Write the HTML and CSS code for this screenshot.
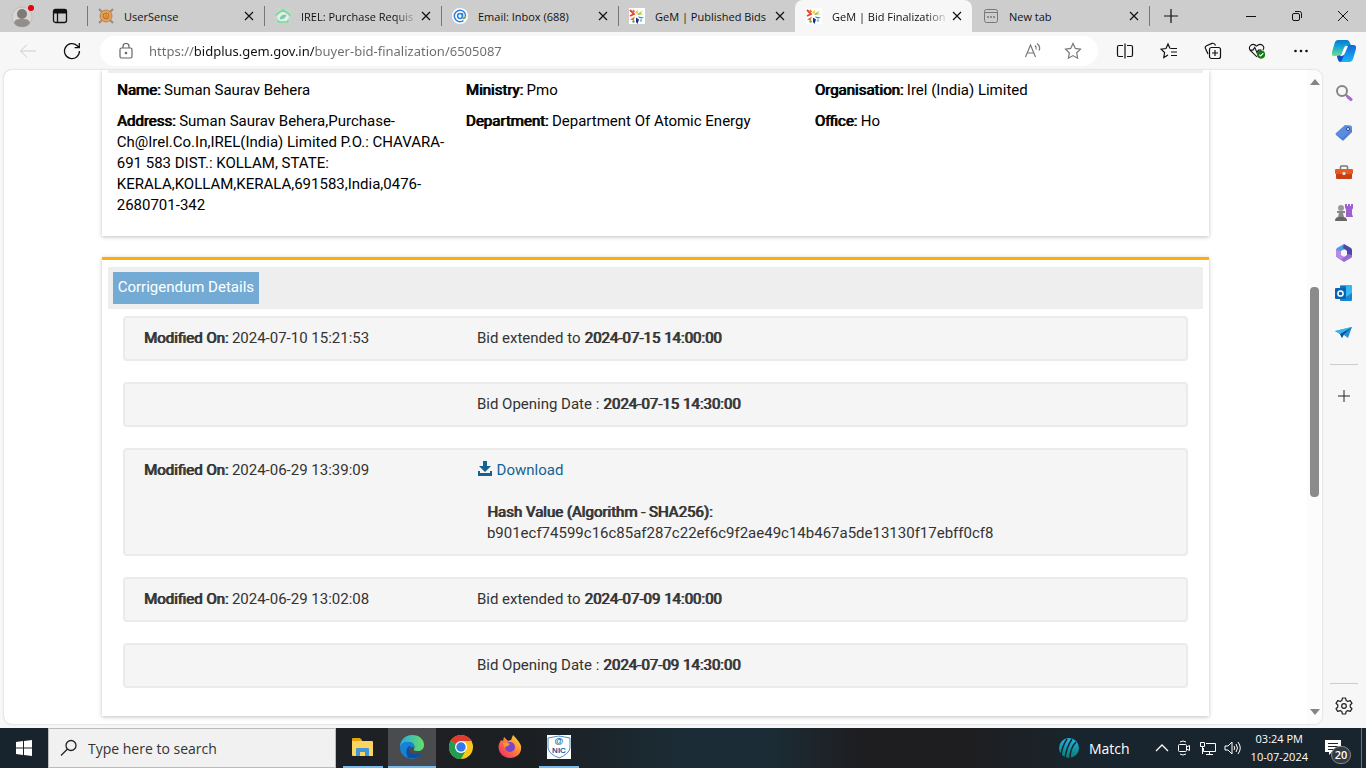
FILE: index.html
```
<!DOCTYPE html>
<html lang="en">
<head>
    <meta charset="UTF-8">
    <meta name="viewport" content="width=device-width, initial-scale=1.0">
    <title>GeM | Bid Finalization</title>
    <link rel="stylesheet" href="styles.css">
</head>
<body>
    <!-- Shared icons -->
    <svg class="defs" aria-hidden="true">
        <symbol id="close" viewBox="0 0 16 16"><path d="M4 4l8 8M12 4l-8 8" fill="none" stroke="#111" stroke-width="1.2"/></symbol>
        <symbol id="gem" viewBox="0 0 16 16">
            <rect width="16" height="16" fill="#fff"/>
            <path d="M1 2l4 4-4 2" fill="none" stroke="#e0412f" stroke-width="1.8"/>
            <path d="M4 2l1.500 2" stroke="#ef6c1a" stroke-width="1.500"/>
            <path d="M6 5l3-3.500-.5 4z" fill="#f2c21a"/>
            <path d="M8 6l6-3.500-2.500 3L15 6l-6 1z" fill="#a5c73c"/>
            <path d="M9 8.500l6 1-2 1-3-.5z" fill="#2f8fd0"/>
            <path d="M7 9.500l3 2-1.500 4.500-1.500-2z" fill="#1f2a8c"/>
            <path d="M1 11.500l5-3-1.500 4z" fill="#ef6c1a"/>
            <circle cx="4.500" cy="13.500" r="1.200" fill="#4caf50"/>
            <circle cx="12" cy="12.500" r="1.200" fill="#6cc2e8"/>
        </symbol>
    </svg>

    <!-- Browser tabs -->
    <header class="tab-bar">
        <div class="profile">
            <button class="icon-btn" aria-label="Profile">
                <svg width="24" height="24" viewBox="0 0 24 24"><circle cx="11" cy="13" r="10" fill="#d8d5d2" stroke="#c2beba"/><circle cx="11" cy="10" r="5" fill="#7d7a78"/><path d="M3 19c1-4 4-4 8-4s7 0 8 4c-2 3-5 4-8 4s-6-1-8-4z" fill="#918e8b"/><circle cx="20" cy="4" r="3" fill="#e3000f"/></svg>
            </button>
            <button class="icon-btn" aria-label="Tab actions">
                <svg width="16" height="16" viewBox="0 0 16 16" fill="none" stroke="#111" stroke-width="1.3"><rect x="1.5" y="1.5" width="13" height="13" rx="2"/><path d="M1.5 3.5h13" stroke-width="4"/><path d="M5.5 5v9"/></svg>
            </button>
        </div>
        <div class="tab">
            <svg width="16" height="16" viewBox="0 0 16 16"><path d="M1 1l14 14M15 1L1 15" stroke="#9a8a80" stroke-width="2"/><circle cx="8" cy="8" r="6" fill="#dda659" stroke="#bd8348"/><circle cx="8" cy="8" r="3" fill="none" stroke="#c06a25"/><path d="M7 5h2v3l2 2H5l2-2z" fill="#d9863c"/></svg>
            <span class="tab-title">UserSense</span>
            <button class="tab-close" aria-label="Close tab"><svg><use href="#close"/></svg></button>
        </div>
        <div class="tab">
            <svg width="16" height="16" viewBox="0 0 16 16"><rect width="16" height="16" fill="#c4d6cb"/><path d="M8 2l6.500 4.500L12.500 14h-9L1.500 6.500z" fill="#e3eee7"/><path d="M1.500 8V6.500L8 2l6.500 4.500V8M3 12l.5 2h9l.5-2" fill="none" stroke="#79d99b" stroke-width="1.6"/><path d="M4.500 11c1-4 4-5 7-4-1 3-4 5-7 4z" fill="#79c9b4"/></svg>
            <span class="tab-title fade">IREL: Purchase Requis</span>
            <button class="tab-close" aria-label="Close tab"><svg><use href="#close"/></svg></button>
        </div>
        <div class="tab">
            <svg width="16" height="16" viewBox="0 0 16 16" fill="none"><circle cx="8" cy="8" r="8" fill="#fff"/><circle cx="8" cy="8" r="2.4" stroke="#2b7de0" stroke-width="1.5"/><path d="M10.500 5v4c0 2 3 2 3-1C13.500 4.500 11 2.300 8 2.300S2.300 5 2.300 8 5 13.700 8 13.700c1.500 0 2.500-.4 3.500-1" stroke="#2b7de0" stroke-width="1.500"/><path d="M13.500 8c0 3-3 3-3 1" stroke="#7cb342" stroke-width="1.500"/></svg>
            <span class="tab-title">Email: Inbox (688)</span>
            <button class="tab-close" aria-label="Close tab"><svg><use href="#close"/></svg></button>
        </div>
        <div class="tab">
            <svg width="16" height="16"><use href="#gem"/></svg>
            <span class="tab-title">GeM | Published Bids</span>
            <button class="tab-close" aria-label="Close tab"><svg><use href="#close"/></svg></button>
        </div>
        <div class="tab active">
            <svg width="16" height="16"><use href="#gem"/></svg>
            <span class="tab-title fade">GeM | Bid Finalization</span>
            <button class="tab-close" aria-label="Close tab"><svg><use href="#close"/></svg></button>
        </div>
        <div class="tab last">
            <svg width="16" height="16" viewBox="0 0 16 16" fill="none" stroke="#777"><rect x="1.500" y="1.500" width="13" height="13" rx="2"/><path d="M2 4.500h12"/><path d="M4 9h2M7 9h2M10 9h2" stroke-width="1.500"/></svg>
            <span class="tab-title">New tab</span>
            <button class="tab-close" aria-label="Close tab"><svg><use href="#close"/></svg></button>
        </div>
        <button class="new-tab" aria-label="New tab"><svg width="16" height="16" viewBox="0 0 16 16"><path d="M8 1v14M1 8h14" stroke="#111" stroke-width="1.200"/></svg></button>
        <div class="window-buttons">
            <button aria-label="Minimize"><svg width="12" height="12" viewBox="0 0 12 12"><path d="M1 6.500h10" stroke="#111"/></svg></button>
            <button aria-label="Restore"><svg width="12" height="12" viewBox="0 0 12 12" fill="none" stroke="#111"><rect x="1.500" y="3.500" width="7" height="7" rx="1.500"/><path d="M4 1.500h4.500q2 0 2 2V8"/></svg></button>
            <button aria-label="Close"><svg width="12" height="12" viewBox="0 0 12 12"><path d="M1 1l10 10M11 1L1 11" stroke="#111"/></svg></button>
        </div>
    </header>

    <!-- Address bar -->
    <div class="toolbar">
        <button class="icon-btn" aria-label="Back"><svg width="18" height="18" viewBox="0 0 18 18" fill="none" stroke="#ccc"><path d="M17 9H2M8 2.500L1.500 9 8 15.500"/></svg></button>
        <button class="icon-btn" aria-label="Refresh"><svg width="18" height="18" viewBox="0 0 18 18" fill="none" stroke="#111" stroke-width="1.300"><path d="M16.500 9A7.500 7.500 0 1 1 14 3.500L16 5.500M16.300 1v4.700h-4.700"/></svg></button>
        <div class="address">
            <svg width="14" height="16" viewBox="0 0 14 16" fill="none" stroke="#666" stroke-width="1.200"><rect x="1" y="5" width="12" height="10" rx="1.500"/><path d="M4 5V3.500a3 3 0 0 1 6 0V5"/><circle cx="7" cy="10" r=".7" fill="#666"/></svg>
            <input class="url" type="text" aria-label="Address" value="https://bidplus.gem.gov.in/buyer-bid-finalization/6505087">
            <button class="icon-btn" aria-label="Read aloud"><svg width="18" height="18" viewBox="0 0 18 18" fill="none" stroke="#777" stroke-width="1.200"><path d="M1.500 15L6.500 3l5 12M3.200 11h6.600"/><path d="M11 3.500q2 2 1 4M13 1.500q4 3 2 7"/></svg></button>
            <button class="icon-btn" aria-label="Favorite"><svg width="18" height="18" viewBox="0 0 18 18" fill="none" stroke="#777" stroke-width="1.200"><path d="M9 1.500l2.300 4.900 5.200.7-3.800 3.700.9 5.400L9 13.600l-4.600 2.600.9-5.400L1.500 7.100l5.200-.7z"/></svg></button>
        </div>
        <div class="tools">
            <button class="icon-btn" aria-label="Split screen"><svg width="18" height="18" viewBox="0 0 18 18" fill="none" stroke="#111" stroke-width="1.200"><path d="M7 3.500H3q-1.500 0-1.500 1.500v8q0 1.500 1.500 1.500h4M11 3.500h4q1.500 0 1.500 1.500v8q0 1.500-1.500 1.500h-4M9 1.500v15"/></svg></button>
            <button class="icon-btn" aria-label="Favorites"><svg width="18" height="18" viewBox="0 0 18 18" fill="none" stroke="#111" stroke-width="1.200"><path d="M10 6.500L8 2 6 6.500l-5 .7 3.600 3.300-.8 5L8 13M10.500 6.500H17M11 10h6M11 13.500h6"/></svg></button>
            <button class="icon-btn" aria-label="Collections"><svg width="18" height="18" viewBox="0 0 18 18" fill="none" stroke="#111" stroke-width="1.200"><rect x="5.500" y="5.500" width="11" height="11" rx="2"/><path d="M11 8v6M8 11h6M4 12L1.500 6.500q-.8-2 1-2.800L8 1.400q2-.6 3 1.100l.5 1"/></svg></button>
            <button class="icon-btn" aria-label="Browser essentials"><svg width="20" height="18" viewBox="0 0 20 18" fill="none" stroke="#111" stroke-width="1.200"><path d="M10 15.500L3 9C-1 4 5-1 9.500 3.500 14 -1 20 4 16.500 8M2 8h3.500l2-3 2.500 6L11.500 8H15"/><circle cx="14.500" cy="13" r="4.500" fill="#107c10" stroke="none"/><path d="M12.500 13l1.500 1.500 3-3" stroke="#fff"/></svg></button>
            <button class="icon-btn" aria-label="More"><svg width="18" height="18" viewBox="0 0 18 18" fill="#111"><circle cx="3.500" cy="9" r="1.300"/><circle cx="9" cy="9" r="1.300"/><circle cx="14.500" cy="9" r="1.300"/></svg></button>
        </div>
        <button class="icon-btn copilot" aria-label="Copilot">
            <svg width="24" height="24" viewBox="0 0 24 24">
                <defs><linearGradient id="cp1" x2="0" y2="1"><stop stop-color="#0879cc"/><stop offset=".4" stop-color="#12a3d6"/><stop offset="1" stop-color="#6fe08a"/></linearGradient><linearGradient id="cp2" x2="0" y2="1"><stop stop-color="#1565d8"/><stop offset="1" stop-color="#16b7f5"/></linearGradient></defs>
                <path d="M6 1h9q2 0 3 3l1 2h-4q-2 0-3 3l-2 6q-1 2-3 2H2q-3 0-2-4L3 3q1-2 3-2z" fill="url(#cp1)"/>
                <path d="M16 6h5q4 0 3 4l-3 10q-1 3-4 3H9q-2 0-3-2l-1-4q4 0 5-3l2-5q1-3 4-3z" fill="url(#cp2)"/>
                <path d="M5 17q4 0 5-3h3l-3 7q-1 2-2 2-2-1-3-6z" fill="#1a49c9"/>
                <path d="M14 7h2l-3 7q-1 3-4 3H8q1-1 2-3l2-5q1-2 2-2z" fill="#fff"/>
            </svg>
        </button>
    </div>

    <div class="workspace">
        <!-- Page -->
        <div class="page">
            <main class="content">
                <section class="card buyer">
                    <div class="strip"></div>
                    <div class="details">
                        <p><b>Name:</b> Suman Saurav Behera</p>
                        <p><b>Ministry:</b> Pmo</p>
                        <p><b>Organisation:</b> Irel (India) Limited</p>
                        <p><b>Address:</b> Suman Saurav Behera,Purchase-Ch@Irel.Co.In,IREL(India) Limited P.O.: CHAVARA-691 583 DIST.: KOLLAM, STATE: KERALA,KOLLAM,KERALA,691583,India,0476-2680701-342</p>
                        <p><b>Department:</b> Department Of Atomic Energy</p>
                        <p><b>Office:</b> Ho</p>
                    </div>
                </section>

                <section class="card corrigendum">
                    <div class="card-header"><h2>Corrigendum Details</h2></div>
                    <div class="well">
                        <div><b>Modified On:</b> 2024-07-10 15:21:53</div>
                        <div>Bid extended to <b>2024-07-15 14:00:00</b></div>
                    </div>
                    <div class="well">
                        <div></div>
                        <div>Bid Opening Date : <b>2024-07-15 14:30:00</b></div>
                    </div>
                    <div class="well">
                        <div><b>Modified On:</b> 2024-06-29 13:39:09</div>
                        <div>
                            <a href="#"><svg width="16" height="15" viewBox="0 0 16 15"><path d="M6 0h4v5h4l-6 6-6-6h4z"/><path d="M1 10h2v2h10v-2h2v5H1z"/></svg> Download</a>
                            <div class="hash"><b>Hash Value (Algorithm - SHA256):</b><br>b901ecf74599c16c85af287c22ef6c9f2ae49c14b467a5de13130f17ebff0cf8</div>
                        </div>
                    </div>
                    <div class="well">
                        <div><b>Modified On:</b> 2024-06-29 13:02:08</div>
                        <div>Bid extended to <b>2024-07-09 14:00:00</b></div>
                    </div>
                    <div class="well">
                        <div></div>
                        <div>Bid Opening Date : <b>2024-07-09 14:30:00</b></div>
                    </div>
                </section>
            </main>
            <div class="scrollbar">
                <svg width="10" height="6" viewBox="0 0 10 6"><path d="M5 0l5 6H0z"/></svg>
                <div class="thumb"></div>
                <svg class="down" width="10" height="6" viewBox="0 0 10 6"><path d="M0 0h10L5 6z"/></svg>
            </div>
        </div>

        <!-- Edge sidebar -->
        <aside class="sidebar">
            <button class="icon-btn" aria-label="Search"><svg width="18" height="18" viewBox="0 0 18 18" fill="none"><circle cx="7" cy="7" r="5" stroke="#858585" stroke-width="2"/><path d="M11 11l2 2" stroke="#777" stroke-width="2"/><path d="M13 13l3 2.500" stroke="#a66bd6" stroke-width="3" stroke-linecap="round"/></svg></button>
            <button class="icon-btn" aria-label="Shopping"><svg width="18" height="18" viewBox="0 0 18 18"><path d="M10 1l5.500.5q1.500 0 1.500 2V8l-8 8q-1 1-2 0l-6-5q-1-1 0-2z" fill="#5b8ce0"/><path d="M1 10.500l7 6L17 8V5l-9 9z" fill="#4270c4" opacity=".5"/><circle cx="13" cy="5" r="1.500" fill="#fff" stroke="#264b8f"/></svg></button>
            <button class="icon-btn" aria-label="Tools"><svg width="18" height="18" viewBox="0 0 18 18"><path d="M5.500 5V3q0-1 1-1h5q1 0 1 1v2" fill="none" stroke="#777" stroke-width="1.500"/><rect x="0" y="5" width="18" height="5" rx="1" fill="#e75a24"/><path d="M1 10h16v4q0 1-1 1H2q-1 0-1-1z" fill="#c93f12"/><circle cx="9" cy="9.500" r="1.700" fill="#ddd"/></svg></button>
            <button class="icon-btn" aria-label="Games"><svg width="20" height="18" viewBox="0 0 20 18"><path d="M11 0h2v2h1V0h2v2h1V0h2v4l-1 2v4l1 3h-7V5l-1-1z" fill="#a05fd0"/><circle cx="7" cy="4" r="3" fill="#999"/><path d="M3 7h8v2H9l1 4H4l1-4H3z" fill="#888"/><path d="M1 17q0-4 4-4h4q4 0 4 4z" fill="#666"/></svg></button>
            <button class="icon-btn" aria-label="Microsoft 365"><svg width="18" height="18" viewBox="0 0 18 18"><path d="M9 0L2 4Q1 5 1 6v6l2 2 3-3V7l6-3z" fill="#4f9be8"/><path d="M9 0l7 4q1 1 1 2v6l-1 2-4-3V7L8 4z" fill="#4b4aa8"/><path d="M1 11q0 2 2 3l6 4 7-4q1-1 1-3l-4-1-4 3-4-2z" fill="#9a6add"/><path d="M1 6l5 1v4l3 2-3 3-3-2q-2-1-2-3z" fill="#b98be6"/><circle cx="9" cy="9" r="2.900" fill="#f7f7f7"/></svg></button>
            <button class="icon-btn" aria-label="Outlook"><svg width="18" height="18" viewBox="0 0 18 18"><rect x="5" y="1" width="12" height="15" rx="1" fill="#35b8f1"/><path d="M5 9l6 4 6-4v7q0 1-1 1H6q-1 0-1-1z" fill="#1686d4"/><path d="M5 2h6v5H5z" fill="#1672b8"/><rect x="0" y="4" width="11" height="11" rx="1" fill="#0864b4"/><circle cx="5.500" cy="9.500" r="2.600" fill="none" stroke="#fff" stroke-width="1.500"/></svg></button>
            <button class="icon-btn" aria-label="Drop"><svg width="18" height="18" viewBox="0 0 18 18"><path d="M0 7l17-4-4 11-4-3-2 3-2-4z" fill="#278fda"/><path d="M5 10l12-7-9 8-1 3z" fill="#0d4b8c"/><path d="M0 7l17-4L5 10z" fill="#35b7e8"/></svg></button>
            <hr>
            <button class="icon-btn add" aria-label="Customize"><svg width="14" height="14" viewBox="0 0 14 14"><path d="M7 1v12M1 7h12" stroke="#222"/></svg></button>
            <div class="side-bottom">
                <hr>
                <button class="icon-btn" aria-label="Settings"><svg width="18" height="18" viewBox="0 0 18 18" fill="none" stroke="#222" stroke-width="1.200"><path d="M7.500 1h3l.7 2.500 1.600.9 2.500-.7L17 6.300 15.200 8v2l1.800 1.700-1.700 2.600-2.500-.7-1.600.9-.7 2.500h-3l-.7-2.500-1.600-.9-2.500.7L1 11.700 2.800 10V8L1 6.300l1.700-2.600 2.500.7 1.600-.9z" stroke-linejoin="round"/><circle cx="9" cy="9" r="2.300"/></svg></button>
            </div>
        </aside>
    </div>

    <!-- Windows taskbar -->
    <footer class="taskbar">
        <button class="start" aria-label="Start"><svg width="16" height="16" viewBox="0 0 16 16" fill="#fff"><path d="M0 2l7-1v6.500H0zM8 1l8-1v7.500H8zM0 8.500h7V15l-7-1zM8 8.500h8V16l-8-1z"/></svg></button>
        <label class="search">
            <svg width="18" height="18" viewBox="0 0 18 18" fill="none" stroke="#222" stroke-width="1.300"><circle cx="11" cy="6.500" r="5"/><path d="M7.500 10L1 16.500"/></svg>
            <input type="text" placeholder="Type here to search">
        </label>
        <div class="apps">
            <button class="app open" aria-label="File Explorer"><svg width="24" height="24" viewBox="0 0 24 24"><path d="M1 4q0-1 1-1h7l2 2v3H1z" fill="#e5a50a"/><path d="M1 6h20q1 0 1 1v14H2q-1 0-1-1z" fill="#fcd462"/><path d="M5 21v-7q0-1 1-1h11q1 0 1 1v7h-4v-4H9v4z" fill="#3f97da"/></svg></button>
            <button class="app open current" aria-label="Edge">
                <svg width="24" height="24" viewBox="0 0 24 24"><defs><linearGradient id="ed"><stop stop-color="#27a9e1"/><stop offset="1" stop-color="#67df62"/></linearGradient></defs><path d="M0 12C0 5 5 0 12 0c8 0 12 5 12 10 0 4-3 6-6 6-4 0-5-1-4-2 2-3-1-6-5-6-4 0-7 1-9 4z" fill="url(#ed)"/><path d="M0 12c1-4 5-6 9-5 4 0 6 3 5 6-2-2-5-1-5 3 0 4 5 6 12 3-5 8-21 6-21-7z" fill="#1681d5"/><path d="M9 11q-5 4-1 12h4c6 0 8-2 10-5-7 3-12 1-13-3 0-2 1-3 2-4z" fill="#0c4fa0"/></svg>
            </button>
            <button class="app" aria-label="Chrome"><svg width="24" height="24" viewBox="0 0 24 24"><circle cx="12" cy="12" r="12" fill="#fdc916"/><path d="M12 12L1.600 6A12 12 0 0 1 22.400 6z" fill="#df3b30"/><path d="M12 12l-10.400-6A12 12 0 0 0 12 24l5-9z" fill="#239b50"/><path d="M12 6h10.400L17 15z" fill="#fdc916"/><circle cx="12" cy="12" r="6" fill="#fff"/><circle cx="12" cy="12" r="4.700" fill="#3479e8"/></svg></button>
            <button class="app" aria-label="Firefox"><svg width="24" height="24" viewBox="0 0 24 24"><defs><linearGradient id="ff" x1="1" x2="0" y2="1"><stop stop-color="#ffe737"/><stop offset=".5" stop-color="#ff793a"/><stop offset="1" stop-color="#eb1c75"/></linearGradient></defs><path d="M3 5l2 1 1-4 4 4q2-1 3-1l2-5q7 7 8 11c1 7-4 12-11 12C4 23-1 16 1 9z" fill="url(#ff)"/><circle cx="12" cy="12" r="5" fill="#7845cc"/><path d="M5 8q4-1 7 1l-2 2q-3 0-3 3z" fill="#ff982c"/></svg></button>
            <button class="app open" aria-label="NIC Email">
                <svg width="24" height="24" viewBox="0 0 24 24"><rect width="24" height="24" fill="#fff"/><path d="M1 3l11-2 11 2v10q-1 6-11 10Q2 19 1 13z" fill="none" stroke="#4b8cc2"/><text class="nic-at" x="12" y="9">@</text><text class="nic-name" x="12" y="18">NIC</text></svg>
            </button>
        </div>
        <div class="tray">
            <button class="match">
                <svg width="22" height="22" viewBox="0 0 22 22"><defs><linearGradient id="icc" x2="0" y2="1"><stop stop-color="#23b5e6"/><stop offset="1" stop-color="#087c70"/></linearGradient></defs><circle cx="11" cy="11" r="10" fill="url(#icc)"/><path d="M3 19Q4 9 9 2M7 22Q8 11 14 2M12 22q0-11 6-17" fill="none" stroke="#19252e" stroke-width="1.500"/></svg>
                Match
            </button>
            <button aria-label="Show hidden icons"><svg width="14" height="14" viewBox="0 0 14 14" fill="none" stroke="#fff" stroke-width="1.300"><path d="M1 10l6-6 6 6"/></svg></button>
            <button aria-label="Meet now"><svg width="16" height="16" viewBox="0 0 16 16" fill="none" stroke="#fff"><rect x="2.500" y="4.500" width="8" height="7" rx="1"/><path d="M10.500 7l3-1.500v5l-3-1.500M4 2q3-2 6 0M4 14q3 2 6 0"/></svg></button>
            <button aria-label="Network"><svg width="18" height="16" viewBox="0 0 18 16" fill="none" stroke="#fff"><path d="M7 3.500h9.500v8H4.500V8M10.500 11.500v3M7 14.500h7M1.500 2.500h4v4h-4zM3.500 6.500V14"/></svg></button>
            <button aria-label="Volume"><svg width="18" height="16" viewBox="0 0 18 16" fill="none" stroke="#fff"><path d="M1 6h3l4-4v12l-4-4H1zM10 6q1.500 2 0 4M12 4q3 4 0 8M14 2q4.500 6 0 12"/></svg></button>
            <time class="clock">03:24 PM<br>10-07-2024</time>
            <button class="notifications" aria-label="Notifications">
                <svg width="18" height="18" viewBox="0 0 18 18"><path d="M1 1h16v12H8l-3 3v-3H1z" fill="#fff"/><path d="M4 4.500h10M4 7.500h10M4 10.500h7" stroke="#19252e"/></svg>
                <span class="badge">20</span>
            </button>
        </div>
    </footer>
</body>
</html>
```
FILE: styles.css
```
* {
    box-sizing: border-box;
}

body {
    display: flex;
    flex-direction: column;
    height: 100vh;
    margin: 0;
    overflow: hidden;
    background-color: #f7f7f7;
    font-family: "Open Sans", "Noto Sans", sans-serif;
    font-size: 11px;
    color: #111;
}

button {
    display: flex;
    align-items: center;
    justify-content: center;
    padding: 0;
    border: none;
    background: none;
    font: inherit;
    color: inherit;
}

.defs {
    position: absolute;
    width: 0;
    height: 0;
}

/* Tabs */
.tab-bar {
    display: flex;
    flex: 0 0 32px;
    background-color: #cdcdcd;
}

.profile {
    display: flex;
    gap: 17px;
    width: 87px;
    padding-left: 11px;
}

.tab {
    position: relative;
    display: flex;
    align-items: center;
    flex: 0 1 177px;
    min-width: 0;
    padding: 0 7px 0 11px;
}

.tab::before {
    content: "";
    position: absolute;
    left: 0;
    top: 6px;
    height: 20px;
    border-left: 1px solid #777;
}

.tab.active {
    background-color: #f7f7f7;
    border-radius: 8px 8px 0 0;
}

.tab.active::before {
    display: none;
}

.tab.last::before {
    left: auto;
    right: -1px;
}

.tab svg {
    flex: none;
}

.tab-title {
    flex: 1;
    margin-left: 10px;
    overflow: hidden;
    white-space: nowrap;
}

.tab-title.fade {
    -webkit-mask-image: linear-gradient(to right, #000 80%, transparent);
    mask-image: linear-gradient(to right, #000 80%, transparent);
}

.tab-close,
.tab-close svg {
    width: 16px;
    height: 16px;
}

.new-tab {
    width: 44px;
}

.window-buttons {
    display: flex;
    margin-left: auto;
}

.window-buttons button {
    width: 46px;
}

/* Toolbar */
.toolbar {
    display: flex;
    align-items: center;
    flex: 0 0 38px;
    padding-left: 19px;
}

.toolbar > .icon-btn + .icon-btn {
    margin-left: 26px;
}

.address {
    display: flex;
    align-items: center;
    flex: 1;
    height: 30px;
    margin-left: 19px;
    padding: 0 16px 0 19px;
    border-radius: 15px;
    background-color: #fff;
}

.address .icon-btn {
    margin-left: 22px;
}

.url {
    flex: 1;
    min-width: 0;
    margin-left: 16px;
    padding: 0;
    border: none;
    outline: none;
    font: 13px "Noto Sans", "Open Sans", sans-serif;
    color: #6b6b6b;
    /* host name darker than the rest of the address */
    background: linear-gradient(to right, #6b6b6b 46px, #111 46px, #111 165px, #6b6b6b 165px);
    -webkit-background-clip: text;
    background-clip: text;
    -webkit-text-fill-color: transparent;
}

.tools {
    display: flex;
    gap: 26px;
    margin-left: 18px;
}

.tools .icon-btn {
    width: 18px;
}

.toolbar > .copilot {
    width: 44px;
    margin-left: 12px;
}

/* Page area */
.workspace {
    display: flex;
    flex: 1;
    min-height: 0;
}

.page {
    display: flex;
    flex: 1;
    min-width: 0;
    margin: 0 0 4px 4px;
    border-radius: 8px;
    overflow: hidden;
    background-color: #fff;
    box-shadow: 0 0 2px #bbb;
}

.content {
    flex: 1;
    min-width: 0;
    overflow: hidden;
    font-family: Roboto, sans-serif;
    font-size: 15px;
    line-height: 21px;
    color: #333;
}

/* bold built from the regular face, keeps its widths */
.content b {
    font-weight: 400;
    text-shadow: 1px 0 0 currentColor;
}

.card {
    width: 85%;
    margin: 0 auto 21px;
    padding: 0 6px;
    background-color: #fff;
    box-shadow: 0 1px 4px rgba(0, 0, 0, 0.25);
}

.strip {
    height: 3px;
    background-color: #eee;
}

.details {
    display: grid;
    grid-template-columns: repeat(3, 1fr);
    row-gap: 10px;
    padding: 7px 40px 20px 9px;
    color: #000;
}

.details p {
    margin: 0;
    padding-right: 15px;
}

.corrigendum {
    padding: 7px 6px 28px;
    border-top: 3px solid #fbb003;
}

.card-header {
    display: flex;
    margin-bottom: 7px;
    padding: 5px;
    background-color: #eee;
}

.card-header h2 {
    margin: 0;
    padding: 5px 5px 6px;
    background-color: #74abd4;
    font-size: 15px;
    font-weight: 400;
    color: #fff;
}

.well {
    display: grid;
    grid-template-columns: 1fr 2fr;
    margin: 0 15px 21px;
    padding: 10px 43px 10px 19px;
    border: 2px solid #ebebeb;
    border-radius: 4px;
    background-color: #f5f5f5;
}

.well:last-child {
    margin-bottom: 0;
}

.well a {
    color: #126394;
    text-decoration: none;
}

.well a svg {
    fill: #126394;
    vertical-align: -1px;
}

.hash {
    margin: 21px 0 0 10px;
}

.scrollbar {
    display: grid;
    grid-template-rows: 24px 193fr 211fr 203fr 24px;
    justify-items: center;
    align-items: center;
    width: 15px;
    background-color: #fcfcfc;
}

.scrollbar svg {
    fill: #858585;
}

.thumb {
    grid-row: 3;
    width: 9px;
    height: 100%;
    border-radius: 4px;
    background-color: #8b8b8b;
}

.scrollbar .down {
    grid-row: 5;
}

/* Sidebar */
.sidebar {
    display: flex;
    flex-direction: column;
    align-items: center;
    gap: 22px;
    width: 44px;
    padding-top: 14px;
}

.sidebar hr {
    width: 28px;
    margin: 0;
    border: none;
    border-top: 1px solid #ccc;
}

.sidebar .add {
    padding-top: 2px;
}

.side-bottom {
    display: flex;
    flex-direction: column;
    align-items: center;
    gap: 13px;
    margin-top: auto;
    margin-bottom: 13px;
}

/* Taskbar */
.taskbar {
    display: flex;
    flex: 0 0 40px;
    background: linear-gradient(to right, #17232e, #1e2023 30%, #1c1f22 39%, #1b2c36 50%, #1b2c36 56%, #1e1e20 63%, #1e1e20 71%, #18252e 80%, #18252e);
    color: #fff;
}

.start {
    width: 48px;
}

.search {
    display: flex;
    align-items: center;
    width: 288px;
    padding: 0 11px;
    border: 1px solid #bbb;
    background-color: #f1f1f1;
}

.search input {
    flex: 1;
    min-width: 0;
    margin-left: 10px;
    padding: 0;
    border: none;
    outline: none;
    background: none;
    font: 14px "Open Sans", "Noto Sans", sans-serif;
}

.search input::placeholder {
    color: #333;
}

.apps {
    display: flex;
    gap: 1px;
    margin-left: 3px;
}

.app {
    width: 48px;
    border-bottom: 2px solid transparent;
    background-clip: padding-box;
}

.app.open {
    background: linear-gradient(#76b9ed, #76b9ed) center bottom / 40px 2px no-repeat border-box;
}

.app.current {
    background: #4a4b4f;
    border-bottom-color: #76b9ed;
}

.nic-at,
.nic-name {
    font: bold 9px "Liberation Sans", sans-serif;
    text-anchor: middle;
    fill: #1d5c9c;
}

.nic-name {
    font-size: 8px;
}

.tray {
    display: flex;
    align-items: center;
    gap: 7px;
    margin-left: auto;
    padding-right: 4px;
}

.match {
    gap: 9px;
    margin-right: 18px;
    font-size: 14px;
}

.clock {
    margin: 0 1px 0 2px;
    line-height: 18px;
    text-align: center;
}

.notifications {
    position: relative;
    justify-content: flex-start;
    width: 46px;
    height: 40px;
    padding-left: 8px;
    border-right: 1px solid #66727a;
}

.badge {
    position: absolute;
    left: 15px;
    top: 18px;
    width: 20px;
    border: 1px solid #888;
    border-radius: 9px;
    background-color: #333b42;
    font-weight: 600;
    line-height: 16px;
}
```
